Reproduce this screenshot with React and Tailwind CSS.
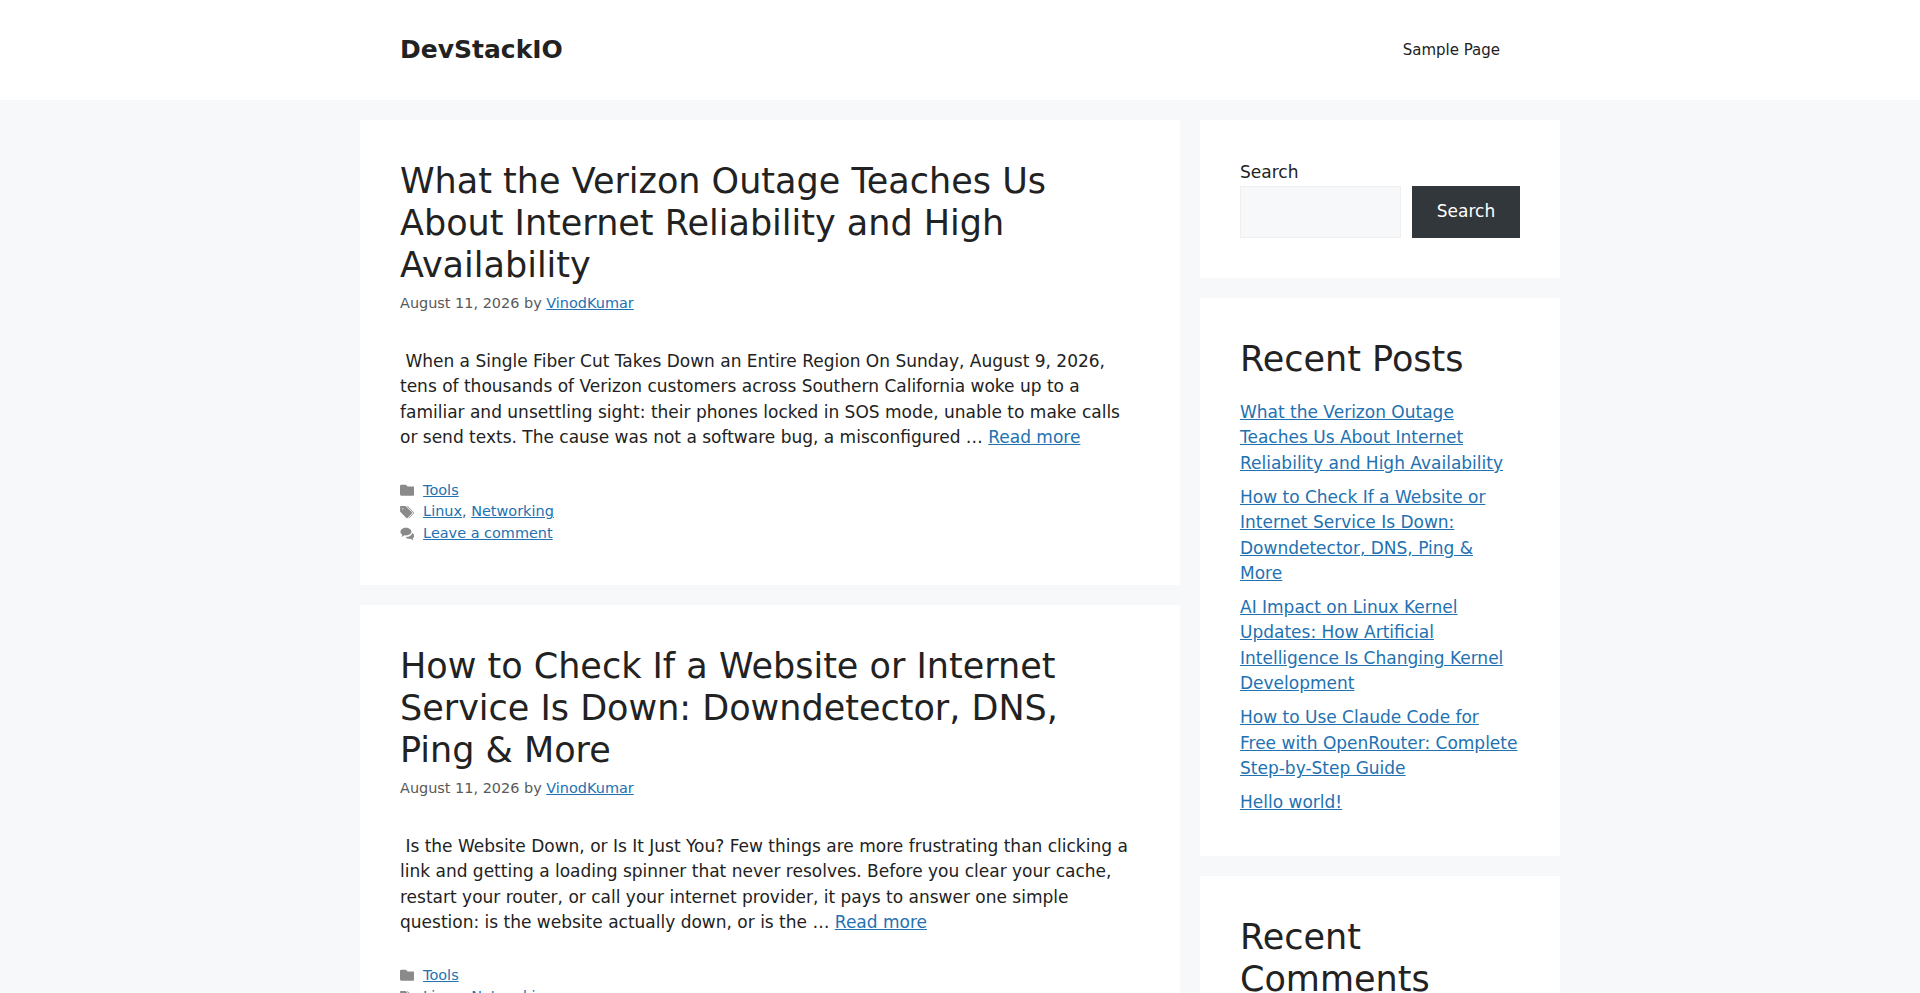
import { FaFolder } from 'react-icons/fa'

const posts = [
  {
    id: 1,
    title: 'What the Verizon Outage Teaches Us About Internet Reliability and High Availability',
    excerpt: '\u00a0When a Single Fiber Cut Takes Down an Entire Region On Sunday, August 9, 2026, tens of thousands of Verizon customers across Southern California woke up to a familiar and unsettling sight: their phones locked in SOS mode, unable to make calls or send texts. The cause was not a software bug, a misconfigured …',
  },
  {
    id: 2,
    title: 'How to Check If a Website or Internet Service Is Down: Downdetector, DNS, Ping & More',
    excerpt: '\u00a0Is the Website Down, or Is It Just You? Few things are more frustrating than clicking a link and getting a loading spinner that never resolves. Before you clear your cache, restart your router, or call your internet provider, it pays to answer one simple question: is the website actually down, or is the …',
  },
]

const recentPosts = [
  'What the Verizon Outage Teaches Us About Internet Reliability and High Availability',
  'How to Check If a Website or Internet Service Is Down: Downdetector, DNS, Ping & More',
  'AI Impact on Linux Kernel Updates: How Artificial Intelligence Is Changing Kernel Development',
  'How to Use Claude Code for Free with OpenRouter: Complete Step-by-Step Guide',
  'Hello world!',
]

const linkClass = 'text-[#2271b1] underline'

function TagIcon({ className }) {
  return (
    <svg viewBox="0 0 512 512" fill="currentColor" className={className}>
      <path d="M20 39.5c-8.836 0-16 7.163-16 16v176c0 4.243 1.686 8.313 4.687 11.314l224 224c6.248 6.248 16.378 6.248 22.626 0l176-176c6.244-6.244 6.25-16.364.013-22.615l-223.5-224A15.999 15.999 0 0 0 196.5 39.5H20zm56 96c0-13.255 10.745-24 24-24s24 10.745 24 24-10.745 24-24 24-24-10.745-24-24z" />
      <path d="M259.515 43.015c4.686-4.687 12.284-4.687 16.97 0l228 228c4.686 4.686 4.686 12.284 0 16.97l-180 180c-4.686 4.687-12.284 4.687-16.97 0-4.686-4.686-4.686-12.284 0-16.97L479.029 279.5 259.515 59.985c-4.686-4.686-4.686-12.284 0-16.97z" />
    </svg>
  )
}

function CommentsIcon({ className }) {
  return (
    <svg viewBox="0 0 512 512" fill="currentColor" className={className}>
      <path d="M210 30C100 30 16 92 16 170c0 44 26 82 68 108-6 28-22 52-44 72 44-4 86-24 118-54 17 3 34 4 52 4 110 0 194-62 194-130S320 30 210 30z" />
      <path d="M430 210c-8 78-92 138-214 142-8 0-14 1-20 1 28 44 84 70 146 70 12 0 24-1 36-3 30 26 64 42 104 46-18-18-30-38-34-60 36-22 58-54 58-92 0-44-30-82-76-104z" />
    </svg>
  )
}

function MetaRow({ icon: Icon, children }) {
  return (
    <div className="flex items-center">
      <span className="mr-[8.67px] flex w-[14.45px] justify-center text-[#595959] opacity-70">
        <Icon className="h-[14.45px] w-[14.45px]" />
      </span>
      <span>{children}</span>
    </div>
  )
}

function PostCard({ post }) {
  return (
    <article className="bg-white p-10">
      <h2 className="text-[35px] leading-[42px] font-normal text-[#222222]">{post.title}</h2>
      <div className="mt-[7.2px] text-[14.45px] leading-[21.68px] text-[#595959]">
        August 11, 2026 by <a href="#" className={linkClass}>VinodKumar</a>
      </div>
      <p className="mt-[34px]">
        {post.excerpt} <a href="#" className={linkClass}>Read more</a>
      </p>
      <footer className="mt-[28.9px] text-[14.45px] leading-[21.68px] text-[#595959]">
        <MetaRow icon={FaFolder}>
          <a href="#" className={linkClass}>Tools</a>
        </MetaRow>
        <MetaRow icon={TagIcon}>
          <a href="#" className={linkClass}>Linux</a>, <a href="#" className={linkClass}>Networking</a>
        </MetaRow>
        <MetaRow icon={CommentsIcon}>
          <a href="#" className={linkClass}>Leave a comment</a>
        </MetaRow>
      </footer>
    </article>
  )
}

export default function App() {
  return (
    <div className="min-h-screen bg-[#f7f8f9] text-[17px] leading-[25.5px] text-[#222222] [font-family:'DejaVu_Sans',sans-serif]">
      <header className="bg-white">
        <div className="mx-auto flex h-[100px] w-[1200px] items-center justify-between px-10">
          <a href="#" className="text-[25px] font-bold text-[#222222]">DevStackIO</a>
          <nav>
            <a href="#" className="block px-5 text-[15px] leading-[60px] text-[#222222]">Sample Page</a>
          </nav>
        </div>
      </header>

      <div className="mx-auto mt-5 flex w-[1200px] items-start gap-5 pb-5">
        <main className="flex w-[820px] flex-col gap-5">
          {posts.map(post => (
            <PostCard key={post.id} post={post} />
          ))}
        </main>

        <aside className="flex w-[360px] flex-col gap-5">
          <section className="bg-white p-10">
            <label htmlFor="search" className="block">Search</label>
            <div className="mt-[0.5px] flex gap-[10.625px]">
              <input id="search" type="text" className="h-[52px] min-w-0 flex-1 border border-[#efefef] bg-[#f7f8f9]" />
              <button className="h-[52px] w-[108px] shrink-0 bg-[#32373c] text-white">Search</button>
            </div>
          </section>

          <section className="bg-white p-10">
            <h2 className="mb-[19.9px] text-[35px] leading-[42px] font-normal">Recent Posts</h2>
            <ul className="flex flex-col gap-[8.3px]">
              {recentPosts.map(title => (
                <li key={title}>
                  <a href="#" className={linkClass}>{title}</a>
                </li>
              ))}
            </ul>
          </section>

          <section className="bg-white p-10">
            <h2 className="mb-5 text-[35px] leading-[42px] font-normal">Recent Comments</h2>
          </section>
        </aside>
      </div>
    </div>
  )
}
